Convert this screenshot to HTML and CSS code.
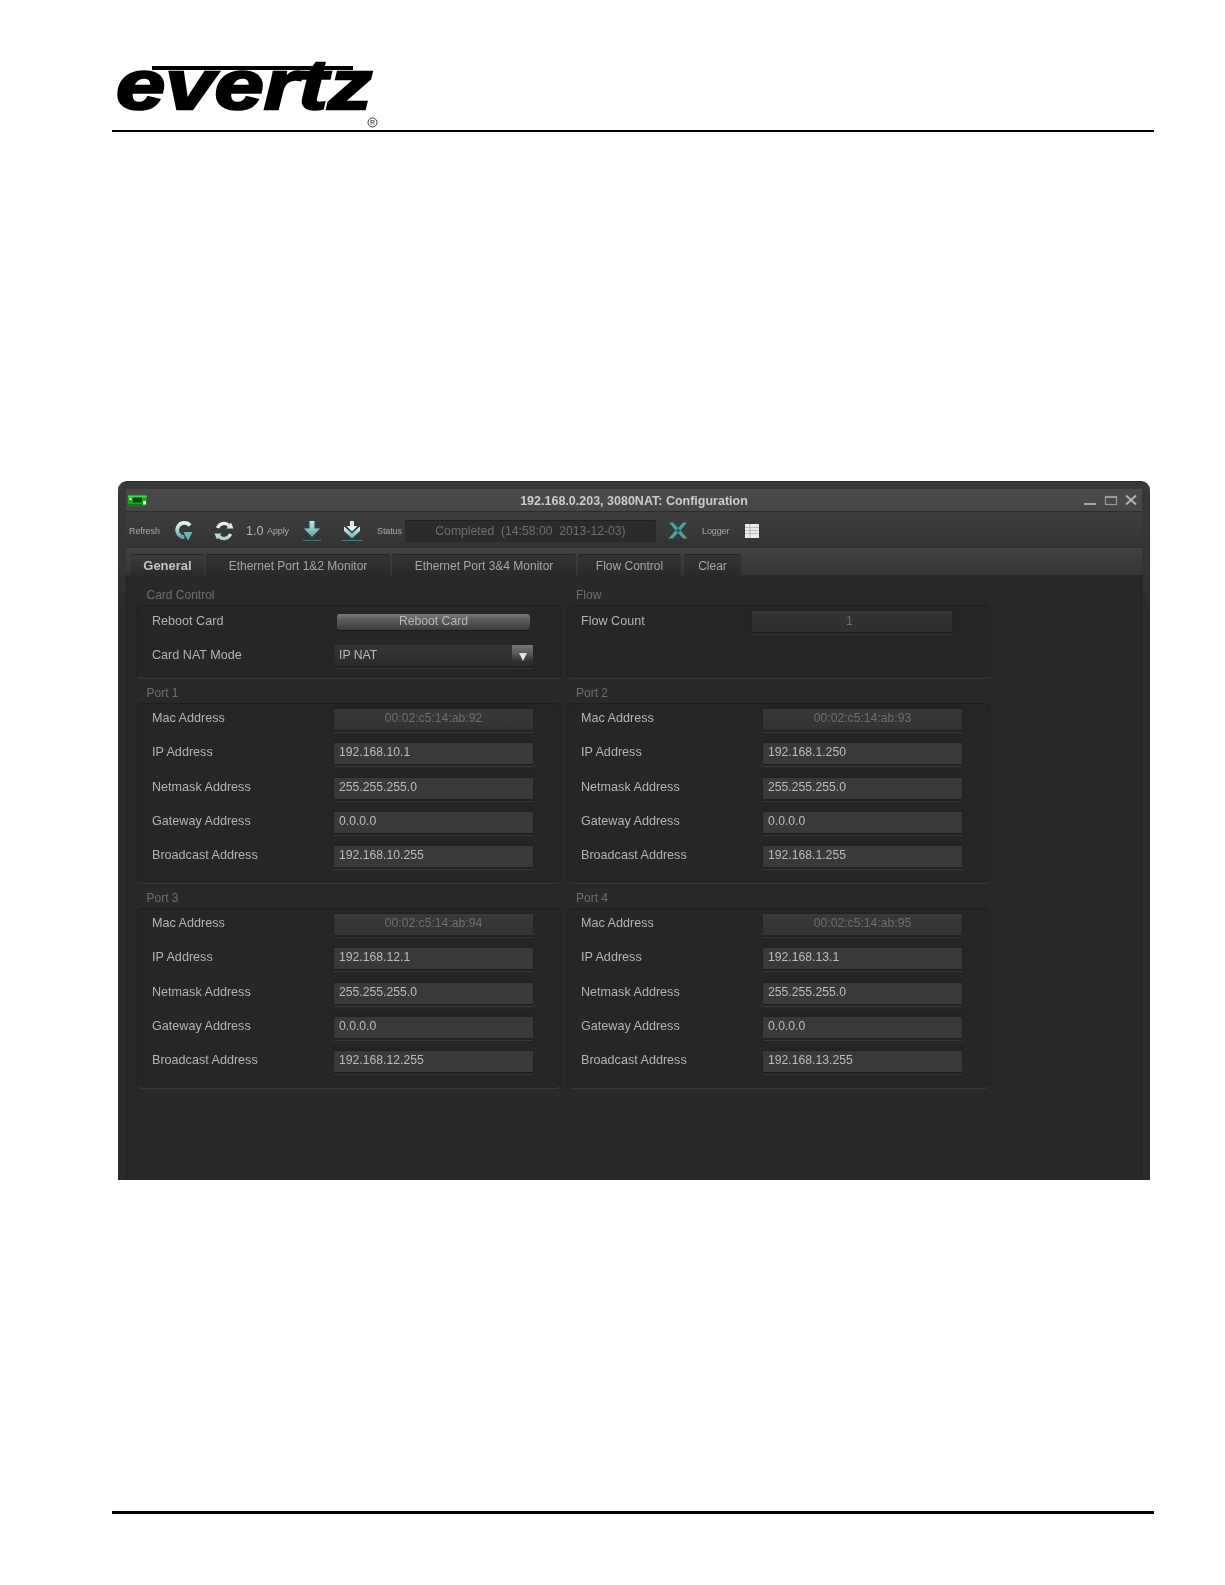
FILE: index.html
```
<!DOCTYPE html>
<html lang="en">
<head>
<meta charset="utf-8">
<title>192.168.0.203, 3080NAT: Configuration</title>
<link rel="stylesheet" href="styles.css">
</head>
<body>
<div class="page">
  <header class="doc-header">
    <svg class="logo" viewBox="112 0 280 130" width="280" height="130" role="img" aria-label="evertz">
      <rect x="152" y="66" width="201" height="4" fill="#000"/>
      <text class="logo-word" x="116" y="109" textLength="256" lengthAdjust="spacingAndGlyphs">evertz</text>
      <circle cx="372.500" cy="122.500" r="4.500" fill="none" stroke="#222" stroke-width="0.900"/>
      <text class="logo-reg" x="372.500" y="125" text-anchor="middle">R</text>
    </svg>
  </header>
  <div class="rule-top"></div>

  <main class="window">
    <div class="titlebar">
      <div class="title-left">
        <svg width="19" height="11" viewBox="0 0 19 11">
          <rect x="0" y="0.500" width="18.500" height="10" fill="#12a516"/>
          <rect x="0" y="0.500" width="18.500" height="2" fill="#4fd24e"/>
          <rect x="5" y="2.500" width="9" height="5" fill="#0a4a0e"/>
          <rect x="1.500" y="3" width="2" height="2" fill="#dfffdc"/>
          <rect x="15" y="6" width="3" height="3.500" fill="#eefce9"/>
          <rect x="0" y="9" width="14" height="1.500" fill="#0b7d10"/>
        </svg>
      </div>
      <div class="title-text">192.168.0.203, 3080NAT: Configuration</div>
      <div class="title-right">
        <svg width="53" height="12" viewBox="0 0 53 12">
          <rect x="0" y="9" width="12" height="2" fill="#a6a6a6"/>
          <rect x="21.500" y="2.500" width="11" height="8" fill="none" stroke="#9a9a9a" stroke-width="1.200"/>
          <rect x="21" y="2" width="12" height="2" fill="#9a9a9a"/>
          <path d="M42 1.500 L52 10.500 M52 1.500 L42 10.500" stroke="#b4b4b4" stroke-width="1.800" fill="none"/>
        </svg>
      </div>
    </div>

    <div class="toolbar">
      <span class="tb-label">Refresh</span>
      <svg class="tb-icon" width="20" height="22" viewBox="0 0 20 22">
        <defs>
          <linearGradient id="tealA" x1="0" y1="0" x2="0" y2="1">
            <stop offset="0" stop-color="#eef7f6"/>
            <stop offset="1" stop-color="#5fa8a6"/>
          </linearGradient>
        </defs>
        <path d="M16 5.500 A7.200 7.200 0 1 0 10.500 17.200" fill="none" stroke="url(#tealA)" stroke-width="3.800"/>
        <path d="M9.500 12 L18.500 12 L14 20.500 Z" fill="#6db5b2"/>
      </svg>
      <svg class="tb-icon" width="20" height="22" viewBox="0 0 20 22">
        <defs>
          <linearGradient id="tealB" x1="0" y1="0" x2="0" y2="1">
            <stop offset="0" stop-color="#f2f7f6"/>
            <stop offset="1" stop-color="#a9d0cd"/>
          </linearGradient>
        </defs>
        <path d="M3.500 8 A7 7 0 0 1 15 5.500" fill="none" stroke="#e8efee" stroke-width="3.200"/>
        <path d="M16.500 14 A7 7 0 0 1 5 16.500" fill="none" stroke="url(#tealB)" stroke-width="3.200"/>
        <path d="M12.500 8.500 L19.500 8.500 L17 2.500 Z" fill="#dce9e7"/>
        <path d="M0.500 13.500 L7.500 13.500 L3 19.500 Z" fill="#bcdcd9"/>
      </svg>
      <span class="tb-value">1.0</span>
      <span class="tb-label">Apply</span>
      <svg class="tb-icon" width="20" height="22" viewBox="0 0 20 22">
        <defs>
          <linearGradient id="tealC" x1="0" y1="0" x2="0" y2="1">
            <stop offset="0" stop-color="#c7e5e2"/>
            <stop offset="1" stop-color="#4ea8a4"/>
          </linearGradient>
        </defs>
        <path d="M7.500 1 H12.500 V8.500 H18 L10 17 L2 8.500 H7.500 Z" fill="url(#tealC)"/>
        <rect x="1" y="20" width="18" height="1" fill="#2d8a80"/>
      </svg>
      <svg class="tb-icon" width="20" height="22" viewBox="0 0 20 22">
        <defs>
          <linearGradient id="tealD" x1="0" y1="0" x2="0" y2="1">
            <stop offset="0" stop-color="#eef5f4"/>
            <stop offset="1" stop-color="#58aca8"/>
          </linearGradient>
        </defs>
        <path d="M8 1 H12 V6 H15.500 L10 11.500 L4.500 6 H8 Z" fill="#dfeceb"/>
        <path d="M2 6.500 L10 13.500 L18 6.500 V11 L10 18.500 L2 11 Z" fill="url(#tealD)"/>
        <rect x="0" y="20" width="20" height="1" fill="#2d8a80"/>
      </svg>
      <span class="tb-label">Status</span>
      <div class="status-field">Completed  (14:58:00  2013-12-03)</div>
      <svg class="tb-icon" width="20" height="17" viewBox="0 0 20 17">
        <path d="M1 0.500 H5 L10 6 L15 0.500 H19 L12.500 8.500 L19.500 16.500 H15 L10 11 L5 16.500 H0.500 L7.500 8.500 Z" fill="#4f9f9c"/>
        <path d="M7.500 8.500 L10 6 L12.500 8.500 L10 11 Z" fill="#26605f"/>
      </svg>
      <span class="tb-label">Logger</span>
      <svg class="tb-icon" width="14" height="14" viewBox="0 0 14 14">
        <rect width="14" height="14" fill="#ececec"/>
        <path d="M0 3.500 H14 M0 6.500 H14 M0 9.500 H14 M5 0 V14" stroke="#b0b0b0" stroke-width="0.800" fill="none"/>
      </svg>
    </div>

    <nav class="tabs">
      <div class="tab tab-active tab-general">General</div>
      <div class="tab tab-eth">Ethernet Port 1&amp;2 Monitor</div>
      <div class="tab tab-eth">Ethernet Port 3&amp;4 Monitor</div>
      <div class="tab tab-flow">Flow Control</div>
      <div class="tab tab-clear">Clear</div>
    </nav>

    <div class="content">
      <section class="group">
        <h2 class="legend">Card Control</h2>
        <div class="panel panel-short">
          <div class="row">
            <span class="label">Reboot Card</span>
            <div class="btn-wrap"><div class="btn">Reboot Card</div></div>
          </div>
          <div class="row">
            <span class="label">Card NAT Mode</span>
            <div class="select">
              <span class="select-text">IP NAT</span>
              <span class="select-arrow"><i class="triangle"></i></span>
            </div>
          </div>
        </div>
      </section>
      <section class="group group-right">
        <h2 class="legend">Flow</h2>
        <div class="panel panel-short">
          <div class="row">
            <span class="label label-flow">Flow Count</span>
            <div class="field field-ro field-flow">1</div>
          </div>
        </div>
      </section>

      <section class="group">
        <h2 class="legend">Port 1</h2>
        <div class="panel">
          <div class="row"><span class="label">Mac Address</span><div class="field field-ro">00:02:c5:14:ab:92</div></div>
          <div class="row"><span class="label">IP Address</span><div class="field">192.168.10.1</div></div>
          <div class="row"><span class="label">Netmask Address</span><div class="field">255.255.255.0</div></div>
          <div class="row"><span class="label">Gateway Address</span><div class="field">0.0.0.0</div></div>
          <div class="row"><span class="label">Broadcast Address</span><div class="field">192.168.10.255</div></div>
        </div>
      </section>
      <section class="group group-right">
        <h2 class="legend">Port 2</h2>
        <div class="panel">
          <div class="row"><span class="label">Mac Address</span><div class="field field-ro">00:02:c5:14:ab:93</div></div>
          <div class="row"><span class="label">IP Address</span><div class="field">192.168.1.250</div></div>
          <div class="row"><span class="label">Netmask Address</span><div class="field">255.255.255.0</div></div>
          <div class="row"><span class="label">Gateway Address</span><div class="field">0.0.0.0</div></div>
          <div class="row"><span class="label">Broadcast Address</span><div class="field">192.168.1.255</div></div>
        </div>
      </section>

      <section class="group">
        <h2 class="legend">Port 3</h2>
        <div class="panel">
          <div class="row"><span class="label">Mac Address</span><div class="field field-ro">00:02:c5:14:ab:94</div></div>
          <div class="row"><span class="label">IP Address</span><div class="field">192.168.12.1</div></div>
          <div class="row"><span class="label">Netmask Address</span><div class="field">255.255.255.0</div></div>
          <div class="row"><span class="label">Gateway Address</span><div class="field">0.0.0.0</div></div>
          <div class="row"><span class="label">Broadcast Address</span><div class="field">192.168.12.255</div></div>
        </div>
      </section>
      <section class="group group-right">
        <h2 class="legend">Port 4</h2>
        <div class="panel">
          <div class="row"><span class="label">Mac Address</span><div class="field field-ro">00:02:c5:14:ab:95</div></div>
          <div class="row"><span class="label">IP Address</span><div class="field">192.168.13.1</div></div>
          <div class="row"><span class="label">Netmask Address</span><div class="field">255.255.255.0</div></div>
          <div class="row"><span class="label">Gateway Address</span><div class="field">0.0.0.0</div></div>
          <div class="row"><span class="label">Broadcast Address</span><div class="field">192.168.13.255</div></div>
        </div>
      </section>
    </div>
  </main>

  <div class="rule-bottom"></div>
</div>
</body>
</html>
```

FILE: styles.css
```
* {
  box-sizing: border-box;
}

html,
body {
  margin: 0;
  padding: 0;
  background: #fff;
}

body {
  font-family: "Liberation Sans", Arial, sans-serif;
}

.page {
  width: 1225px;
  height: 1585px;
  padding: 0 71px 0 112px;
}

.doc-header {
  height: 130px;
}

.logo {
  display: block;
}

.logo-word {
  font-family: "Liberation Sans", Arial, sans-serif;
  font-size: 71px;
  font-weight: 700;
  font-style: italic;
  fill: #000;
  stroke: #000;
  stroke-width: 2.4px;
}

.logo-reg {
  font-family: "Liberation Sans", Arial, sans-serif;
  font-size: 7px;
  fill: #222;
}

.rule-top {
  height: 2px;
  background: #000;
}

.rule-bottom {
  height: 3px;
  margin-top: 331px;
  background: #000;
}

.window {
  width: 1032px;
  height: 699px;
  margin: 349px 0 0 6px;
  padding: 7px 8px 0;
  border-top: 1px solid #262626;
  border-radius: 9px 9px 0 0;
  background: linear-gradient(#383838 0, #333 90px, #2b2b2b 130px);
  display: flex;
  flex-direction: column;
  filter: blur(0.45px);
}

.titlebar {
  height: 23px;
  flex: none;
  display: grid;
  grid-template-columns: 1fr auto 1fr;
  align-items: center;
  background: linear-gradient(#4b4b4b, #464646);
  border-bottom: 1px solid #2e2e2e;
}

.title-left {
  padding-left: 2px;
  display: flex;
}

.title-right {
  display: flex;
  justify-content: flex-end;
  padding-right: 5px;
}

.title-text {
  padding-top: 2px;
  font-size: 12.5px;
  font-weight: 700;
  color: #c9cdd0;
}

.toolbar {
  height: 36px;
  flex: none;
  display: grid;
  grid-template-columns: 45px 40px 32px 21px 35px 40px 35px 28px 263px 34px 43px 14px;
  align-items: center;
  padding: 2px 0 0 3px;
  background: linear-gradient(#3e3e3e, #333);
  border-bottom: 1px solid #2e2e2e;
}

.tb-label {
  font-size: 9px;
  letter-spacing: -0.1px;
  color: #a8a8a8;
}

.tb-value {
  font-size: 12.5px;
  color: #b5b5b5;
}

.tb-icon {
  display: block;
}

.status-field {
  width: 251px;
  height: 22px;
  line-height: 22px;
  text-align: center;
  white-space: pre;
  font-size: 12.2px;
  color: #6f6f6f;
  border-radius: 2px;
  background: #2b2b2b;
  box-shadow: inset 0 1px 1px #1f1f1f;
}

.tabs {
  height: 27px;
  flex: none;
  display: flex;
  align-items: flex-end;
  gap: 2px;
  padding-left: 5px;
  background: linear-gradient(#414141, #353535);
}

.tab {
  height: 21px;
  line-height: 24px;
  text-align: center;
  font-size: 12px;
  color: #a6a6a6;
  border-radius: 3px 3px 0 0;
  background: linear-gradient(#333, #292929);
  box-shadow: inset 0 1px 0 #222;
}

.tab-active {
  font-size: 13px;
  font-weight: 700;
  color: #c4c4c4;
  background: linear-gradient(#3e3e3e, #2a2a2a);
}

.tab-general {
  width: 73px;
}

.tab-eth {
  width: 184px;
}

.tab-flow {
  width: 103px;
}

.tab-clear {
  width: 57px;
  margin-left: 1px;
}

.content {
  flex: 1;
  display: grid;
  grid-template-columns: 426px 424px;
  grid-auto-rows: min-content;
  column-gap: 5px;
  padding: 6px 0 0 9px;
  background: #292929;
  border-left: 1px solid #1f1f1f;
  border-right: 1px solid #1f1f1f;
}

.legend {
  height: 24px;
  margin: 0;
  padding: 0 0 3.5px 10.5px;
  display: flex;
  align-items: flex-end;
  font-size: 12px;
  font-weight: 400;
  line-height: 14px;
  color: #6c6f74;
}

.group-right .legend {
  padding-left: 9px;
}

.panel {
  height: 181px;
  padding: 5px 14px 0 15px;
  display: flex;
  flex-direction: column;
  gap: 13.25px;
  border-radius: 6px;
  background: #262626;
  border-top: 1px solid #1e1e1e;
  border-left: 1px solid #222;
  border-right: 1px solid #222;
  border-bottom: 1px solid #383838;
}

.panel-short {
  height: 74px;
}

.group-right .panel {
  padding-left: 13px;
}

.row {
  height: 21px;
  flex: none;
  display: flex;
  align-items: center;
}

.label {
  width: 182px;
  flex: none;
  padding-bottom: 3px;
  font-size: 12.6px;
  color: #b4b4b4;
}

.panel-short .label {
  padding-bottom: 1px;
}

.label-flow {
  width: 171px;
}

.field {
  width: 199px;
  height: 21px;
  padding-left: 5px;
  line-height: 18px;
  font-size: 12.2px;
  color: #bcbcbc;
  background: #393939;
  box-shadow: 0 -2px 2px #232323, 0 2px 0 #222, 0 3px 0 #383838;
}

.field-ro {
  padding-left: 0;
  text-align: center;
  color: #6f6f6f;
  background: linear-gradient(#393939, #323232);
}

.field-flow {
  width: 200px;
  padding-right: 5px;
  line-height: 21px;
  background: linear-gradient(#353535, #2e2e2e);
}

.btn-wrap {
  width: 199px;
  padding: 0 3px;
  box-shadow: 0 10px 0 -9px #383838;
}

.btn {
  height: 16px;
  line-height: 15px;
  text-align: center;
  font-size: 12.2px;
  color: #b8b8b8;
  border-radius: 3px;
  background: linear-gradient(#7a7a7a 0, #5c5c5c 35%, #3c3c3c 100%);
  box-shadow: 0 1px 0 #1c1c1c;
}

.select {
  width: 199px;
  height: 21px;
  display: flex;
  align-items: stretch;
  background: linear-gradient(#343434, #2a2a2a);
  box-shadow: 0 2px 0 #222, 0 3px 0 #363636;
}

.select-text {
  flex: 1;
  padding-left: 5px;
  line-height: 20px;
  font-size: 12.2px;
  color: #bcbcbc;
}

.select-arrow {
  width: 21px;
  flex: none;
  display: flex;
  align-items: center;
  justify-content: center;
  background: linear-gradient(#767676 0, #5a5a5a 40%, #2c2c2c 80%);
}

.triangle {
  display: block;
  width: 0;
  height: 0;
  margin-top: 3px;
  border-left: 4px solid transparent;
  border-right: 4px solid transparent;
  border-top: 8px solid #e2e2e2;
}
```
